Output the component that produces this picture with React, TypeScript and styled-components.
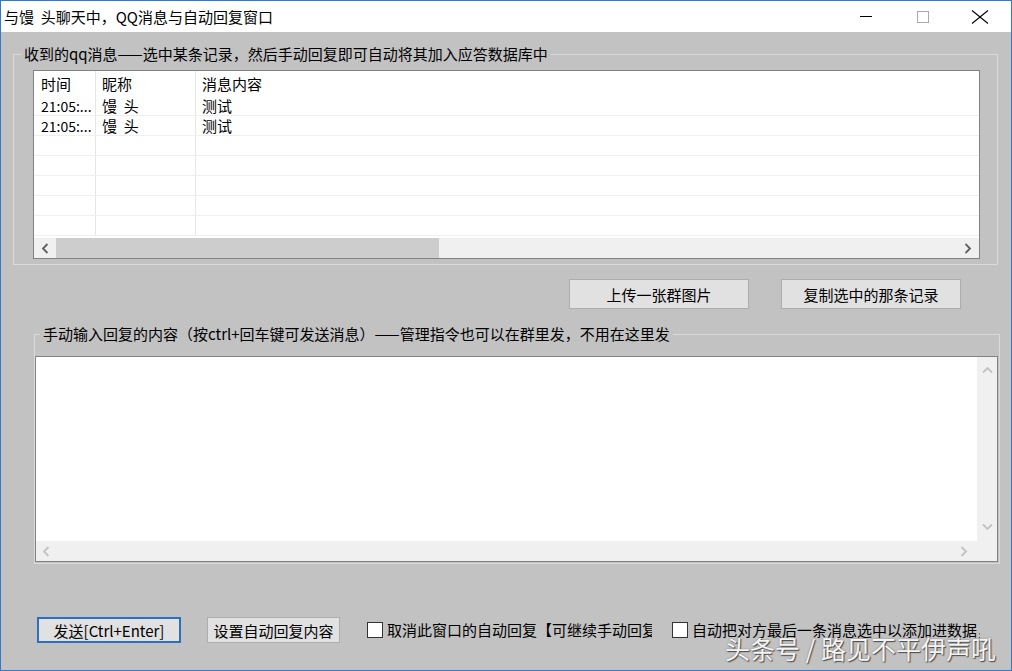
import React from "react";
import styled, { createGlobalStyle } from "styled-components";

const FONT = `"Noto Sans CJK SC", "Microsoft YaHei", sans-serif`;

const GlobalStyle = createGlobalStyle`
  html, body { margin: 0; padding: 0; background: #c2c2c2; }
  body { font-family: ${FONT}; }
  * { box-sizing: border-box; }
`;

const Window = styled.div`
  position: relative;
  width: 1012px;
  height: 671px;
  border: 1px solid #2b7bd0;
  display: flex;
  flex-direction: column;
  overflow: hidden;
  font-family: ${FONT};
  font-size: 15px;
  color: #000;
  background: #c2c2c2;
`;

const TitleBar = styled.header`
  flex: none;
  height: 31px;
  background: #fff;
  display: flex;
  align-items: center;
  justify-content: space-between;
  padding: 0 3px 0 3px;
`;

const Title = styled.span`
  font-size: 15px;
  line-height: 31px;
  white-space: pre;
`;

const Controls = styled.div`
  display: flex;
  height: 31px;
`;

const ControlButton = styled.div`
  width: 57px;
  height: 31px;
  display: flex;
  align-items: center;
  justify-content: center;
`;

const Body = styled.main`
  flex: 1;
  display: flex;
  flex-direction: column;
  align-items: flex-start;
  background: #c2c2c2;
  box-shadow: inset 2px 0 0 #cbbfba;
`;

const Group = styled.fieldset<{ $left: number; $top: number; $width: number }>`
  flex: none;
  margin: ${(p) => p.$top}px 0 0 ${(p) => p.$left}px;
  width: ${(p) => p.$width}px;
  padding: 0;
  min-width: 0;
  border: 1px solid #dadada;
`;

const Legend = styled.legend<{ $offset: number }>`
  margin-left: ${(p) => p.$offset}px;
  padding: 0 3px;
  height: 20px;
  font-size: 15px;
  line-height: 20px;
  white-space: nowrap;
`;

const ListView = styled.div`
  margin: 6px 0 5px 19px;
  width: 947px;
  height: 189px;
  border: 1px solid #828282;
  background: #fff;
  display: flex;
  flex-direction: column;
`;

const ListRow = styled.div<{ $header?: boolean }>`
  flex: none;
  display: grid;
  grid-template-columns: 62px 100px 1fr;
  height: ${(p) => (p.$header ? 25 : 20)}px;
  border-bottom: ${(p) => (p.$header ? "none" : "1px solid #efefef")};
`;

const Cell = styled.div<{ $pad: number; $last?: boolean; $small?: boolean }>`
  padding-left: ${(p) => p.$pad}px;
  border-right: ${(p) => (p.$last ? "none" : "1px solid #e6e6e6")};
  font-size: ${(p) => (p.$small ? 14 : 15)}px;
  color: #000;
  display: flex;
  align-items: center;
  white-space: pre;
  overflow: hidden;
`;

const ListFill = styled.div`
  flex: 1;
`;

const HScroll = styled.div`
  flex: none;
  height: 20px;
  background: #f0f0f0;
  display: flex;
  align-items: stretch;
`;

const ArrowBox = styled.div<{ $w: number }>`
  flex: none;
  width: ${(p) => p.$w}px;
  display: flex;
  align-items: center;
  justify-content: center;
`;

const Thumb = styled.div`
  flex: none;
  width: 383px;
  background: #cdcdcd;
`;

const Track = styled.div`
  flex: 1;
`;

const ButtonRow = styled.div`
  flex: none;
  align-self: stretch;
  margin-top: 14px;
  padding-right: 50px;
  display: flex;
  justify-content: flex-end;
  gap: 32px;
`;

const Button = styled.button<{ $w: number; $h: number; $default?: boolean; $ml?: number }>`
  flex: none;
  width: ${(p) => p.$w}px;
  height: ${(p) => p.$h}px;
  margin: 0 0 0 ${(p) => p.$ml ?? 0}px;
  padding: 0;
  background: #e1e1e1;
  border: ${(p) => (p.$default ? "2px solid #2a6fc0" : "1px solid #adadad")};
  font-family: ${FONT};
  font-size: 15px;
  color: #000;
  display: flex;
  align-items: center;
  justify-content: center;
  white-space: nowrap;
`;

const TextBox = styled.div`
  margin: 12px 1px 1px 0;
  width: 963px;
  height: 206px;
  border: 1px solid #828282;
  background: #fff;
  display: grid;
  grid-template-columns: 1fr 20px;
  grid-template-rows: 1fr 20px;
`;

const TextArea = styled.div`
  background: #fff;
`;

const VBar = styled.div`
  background: #f0f0f0;
  display: flex;
  flex-direction: column;
  align-items: center;
  justify-content: space-between;
  padding: 9px 0 10px;
`;

const HBar = styled.div`
  background: #f0f0f0;
  display: flex;
  align-items: center;
  justify-content: space-between;
  padding: 0 9px 0 6px;
`;

const Corner = styled.div`
  background: #f0f0f0;
`;

const BottomBar = styled.div`
  flex: none;
  margin-top: 53px;
  padding-left: 36px;
  display: flex;
  align-items: center;
`;

const CheckItem = styled.label<{ $w: number; $ml: number }>`
  flex: none;
  width: ${(p) => p.$w}px;
  margin-left: ${(p) => p.$ml}px;
  display: flex;
  align-items: center;
  gap: 4px;
  overflow: hidden;
  white-space: nowrap;
  font-size: 15px;
  line-height: 20px;
`;

const Box = styled.span`
  flex: none;
  width: 16px;
  height: 16px;
  background: #fff;
  border: 1px solid #333;
`;

const Watermark = styled.div`
  position: absolute;
  right: 15px;
  bottom: 7px;
  font-size: 25px;
  line-height: 30px;
  color: #f4f4f4;
  white-space: pre;
  text-shadow: 1px 1px 1px rgba(40, 40, 40, 0.75), 0 0 2px rgba(0, 0, 0, 0.35);
  pointer-events: none;
`;

const Chevron = ({ dir, color }: { dir: "left" | "right" | "up" | "down"; color: string }) => {
  const horiz = dir === "left" || dir === "right";
  const w = horiz ? 8 : 11;
  const h = horiz ? 11 : 8;
  const pts =
    dir === "left"
      ? "6.5,1 2,5.5 6.5,10"
      : dir === "right"
      ? "1.5,1 6,5.5 1.5,10"
      : dir === "up"
      ? "1,6.5 5.5,2 10,6.5"
      : "1,1.5 5.5,6 10,1.5";
  return (
    <svg width={w} height={h} viewBox={`0 0 ${w} ${h}`}>
      <polyline points={pts} fill="none" stroke={color} strokeWidth="1.8" />
    </svg>
  );
};

const rows = [
  { time: "21:05:...", nick: "馒  头", msg: "测试" },
  { time: "21:05:...", nick: "馒  头", msg: "测试" },
  { time: "", nick: "", msg: "" },
  { time: "", nick: "", msg: "" },
  { time: "", nick: "", msg: "" },
  { time: "", nick: "", msg: "" },
  { time: "", nick: "", msg: "" },
];

export default function App() {
  return (
    <>
      <GlobalStyle />
      <Window>
        <TitleBar>
          <Title>与馒  头聊天中，QQ消息与自动回复窗口</Title>
          <Controls>
            <ControlButton>
              <svg width="12" height="2" viewBox="0 0 12 2">
                <line x1="0" y1="0.5" x2="12" y2="0.5" stroke="#000" strokeWidth="1" />
              </svg>
            </ControlButton>
            <ControlButton>
              <svg width="12" height="12" viewBox="0 0 12 12">
                <rect x="0.5" y="0.5" width="11" height="11" fill="none" stroke="#a9a9a9" strokeWidth="1" />
              </svg>
            </ControlButton>
            <ControlButton>
              <svg width="18" height="14" viewBox="0 0 18 14">
                <line x1="1" y1="0.5" x2="17" y2="13.5" stroke="#000" strokeWidth="1.1" />
                <line x1="17" y1="0.5" x2="1" y2="13.5" stroke="#000" strokeWidth="1.1" />
              </svg>
            </ControlButton>
          </Controls>
        </TitleBar>

        <Body>
          <Group $left={12} $top={12} $width={985}>
            <Legend $offset={7}>收到的qq消息——选中某条记录，然后手动回复即可自动将其加入应答数据库中</Legend>
            <ListView>
              <ListRow $header>
                <Cell $pad={7}>时间</Cell>
                <Cell $pad={6}>昵称</Cell>
                <Cell $pad={6} $last>
                  消息内容
                </Cell>
              </ListRow>
              {rows.map((r, i) => (
                <ListRow key={i}>
                  <Cell $pad={7} $small>
                    {r.time}
                  </Cell>
                  <Cell $pad={6}>{r.nick}</Cell>
                  <Cell $pad={6} $last>
                    {r.msg}
                  </Cell>
                </ListRow>
              ))}
              <ListFill />
              <HScroll>
                <ArrowBox $w={22}>
                  <Chevron dir="left" color="#606060" />
                </ArrowBox>
                <Thumb />
                <Track />
                <ArrowBox $w={22}>
                  <Chevron dir="right" color="#606060" />
                </ArrowBox>
              </HScroll>
            </ListView>
          </Group>

          <ButtonRow>
            <Button $w={180} $h={30}>上传一张群图片</Button>
            <Button $w={180} $h={30}>复制选中的那条记录</Button>
          </ButtonRow>

          <Group $left={33} $top={15} $width={966}>
            <Legend $offset={5}>手动输入回复的内容（按ctrl+回车键可发送消息）——管理指令也可以在群里发，不用在这里发</Legend>
            <TextBox>
              <TextArea />
              <VBar>
                <Chevron dir="up" color="#c2c2c2" />
                <Chevron dir="down" color="#c2c2c2" />
              </VBar>
              <HBar>
                <Chevron dir="left" color="#c2c2c2" />
                <Chevron dir="right" color="#c2c2c2" />
              </HBar>
              <Corner />
            </TextBox>
          </Group>

          <BottomBar>
            <Button $w={144} $h={26} $default>
              发送[Ctrl+Enter]
            </Button>
            <Button $w={133} $h={26} $ml={26}>
              设置自动回复内容
            </Button>
            <CheckItem $w={285} $ml={27}>
              <Box />
              取消此窗口的自动回复【可继续手动回复】
            </CheckItem>
            <CheckItem $w={308} $ml={20}>
              <Box />
              自动把对方最后一条消息选中以添加进数据，方便自动回复
            </CheckItem>
          </BottomBar>
        </Body>

        <Watermark>头条号 / 路见不平伊声吼</Watermark>
      </Window>
    </>
  );
}
